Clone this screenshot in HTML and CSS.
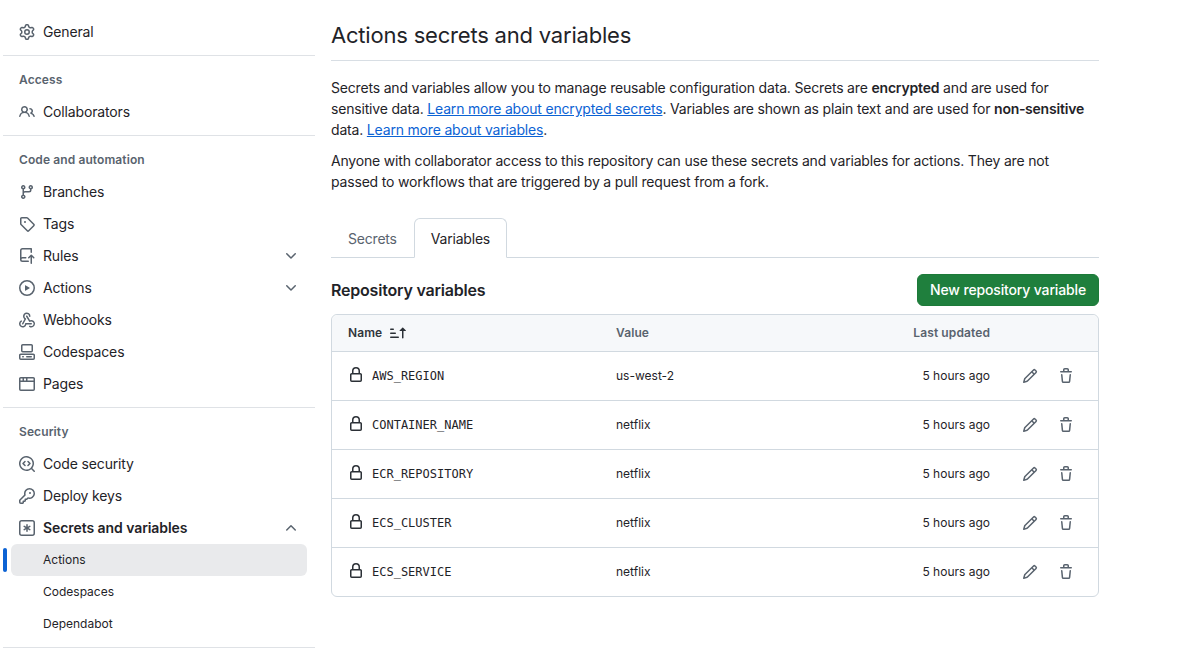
FILE: index.html
```html
<!DOCTYPE html>
<html lang="en">
<head>
    <meta charset="utf-8">
    <title>Actions secrets and variables</title>
    <link rel="stylesheet" href="styles.css">
</head>
<body>

<div class="layout">

    <nav class="sidebar">
        <a class="item"><svg class="icon" viewBox="0 0 16 16"><path d="M8 0a8.2 8.2 0 0 1 .701.031C9.444.095 9.99.645 10.16 1.29l.288 1.107c.018.066.079.158.212.224.231.114.454.243.668.386.123.082.233.09.299.071l1.103-.303c.644-.176 1.392.021 1.82.63.27.385.506.792.704 1.218.315.675.111 1.422-.364 1.891l-.814.806c-.049.048-.098.147-.088.294.016.257.016.515 0 .772-.01.147.038.246.088.294l.814.806c.475.469.679 1.216.364 1.891a7.977 7.977 0 0 1-.704 1.217c-.428.61-1.176.807-1.82.63l-1.102-.302c-.067-.019-.177-.011-.3.071a5.909 5.909 0 0 1-.668.386c-.133.066-.194.158-.211.224l-.29 1.106c-.168.646-.715 1.196-1.458 1.26a8.006 8.006 0 0 1-1.402 0c-.743-.064-1.289-.614-1.458-1.26l-.289-1.106c-.018-.066-.079-.158-.212-.224a5.738 5.738 0 0 1-.668-.386c-.123-.082-.233-.09-.299-.071l-1.103.303c-.644.176-1.392-.021-1.82-.63a8.12 8.12 0 0 1-.704-1.218c-.315-.675-.111-1.422.363-1.891l.815-.806c.05-.048.098-.147.088-.294a6.214 6.214 0 0 1 0-.772c.01-.147-.038-.246-.088-.294l-.815-.806C.635 6.045.431 5.298.746 4.623a7.92 7.92 0 0 1 .704-1.217c.428-.61 1.176-.807 1.82-.63l1.102.302c.067.019.177.011.3-.071.214-.143.437-.272.668-.386.133-.066.194-.158.211-.224l.29-1.106C6.009.645 6.556.095 7.299.03 7.53.01 7.764 0 8 0Zm-.571 1.525c-.036.003-.108.036-.137.146l-.289 1.105c-.147.561-.549.967-.998 1.189-.173.086-.34.183-.5.29-.417.278-.97.423-1.529.27l-1.103-.303c-.109-.03-.175.016-.195.045-.22.312-.412.644-.573.99-.014.031-.021.11.059.19l.815.806c.411.406.562.957.53 1.456a4.709 4.709 0 0 0 0 .582c.032.499-.119 1.05-.53 1.456l-.815.806c-.081.08-.073.159-.059.19.162.346.353.677.573.989.02.03.085.076.195.046l1.102-.303c.56-.153 1.113-.008 1.53.27.161.107.328.204.501.29.447.222.85.629.997 1.189l.289 1.105c.029.109.101.143.137.146a6.6 6.6 0 0 0 1.142 0c.036-.003.108-.036.137-.146l.289-1.105c.147-.561.549-.967.998-1.189.173-.086.34-.183.5-.29.417-.278.97-.423 1.529-.27l1.103.303c.109.029.175-.016.195-.045.22-.313.411-.644.573-.99.014-.031.021-.11-.059-.19l-.815-.806c-.411-.406-.562-.957-.53-1.456a4.709 4.709 0 0 0 0-.582c-.032-.499.119-1.05.53-1.456l.815-.806c.081-.08.073-.159.059-.19a6.464 6.464 0 0 0-.573-.989c-.02-.03-.085-.076-.195-.046l-1.102.303c-.56.153-1.113.008-1.53-.27a4.44 4.44 0 0 0-.501-.29c-.447-.222-.85-.629-.997-1.189l-.289-1.105c-.029-.11-.101-.143-.137-.146a6.6 6.6 0 0 0-1.142 0ZM11 8a3 3 0 1 1-6 0 3 3 0 0 1 6 0ZM9.5 8a1.5 1.5 0 1 0-3.001.001A1.5 1.5 0 0 0 9.5 8Z"/></svg>General</a>
        <hr class="divider">

        <h3 class="group">Access</h3>
        <a class="item"><svg class="icon" viewBox="0 0 16 16"><path d="M2 5.5a3.5 3.5 0 1 1 5.898 2.549 5.508 5.508 0 0 1 3.034 4.084.75.75 0 1 1-1.482.235 4 4 0 0 0-7.9 0 .75.75 0 0 1-1.482-.236A5.507 5.507 0 0 1 3.102 8.05 3.493 3.493 0 0 1 2 5.5ZM11 4a3.001 3.001 0 0 1 2.22 5.018 5.01 5.01 0 0 1 2.56 3.012.749.749 0 0 1-.885.954.752.752 0 0 1-.549-.514 3.507 3.507 0 0 0-2.522-2.372.75.75 0 0 1-.574-.73v-.352a.75.75 0 0 1 .416-.672A1.5 1.5 0 0 0 11 5.5.75.75 0 0 1 11 4Zm-5.5-.5a2 2 0 1 0-.001 3.999A2 2 0 0 0 5.5 3.5Z"/></svg>Collaborators</a>
        <hr class="divider">

        <h3 class="group">Code and automation</h3>
        <a class="item"><svg class="icon" viewBox="0 0 16 16"><path d="M9.5 3.25a2.25 2.25 0 1 1 3 2.122V6A2.5 2.5 0 0 1 10 8.5H6a1 1 0 0 0-1 1v1.128a2.251 2.251 0 1 1-1.5 0V5.372a2.25 2.25 0 1 1 1.5 0v1.836A2.493 2.493 0 0 1 6 7h4a1 1 0 0 0 1-1v-.628A2.25 2.25 0 0 1 9.5 3.25Zm-6 0a.75.75 0 1 0 1.5 0 .75.75 0 0 0-1.5 0Zm8.25-.75a.75.75 0 1 0 0 1.5.75.75 0 0 0 0-1.5ZM4.25 12a.75.75 0 1 0 0 1.5.75.75 0 0 0 0-1.5Z"/></svg>Branches</a>
        <a class="item"><svg class="icon" viewBox="0 0 16 16"><path d="M1 7.775V2.75C1 1.784 1.784 1 2.75 1h5.025c.464 0 .91.184 1.238.513l6.25 6.25a1.75 1.75 0 0 1 0 2.474l-5.026 5.026a1.75 1.75 0 0 1-2.474 0l-6.25-6.25A1.752 1.752 0 0 1 1 7.775Zm1.5 0c0 .066.026.13.073.177l6.25 6.25a.25.25 0 0 0 .354 0l5.025-5.025a.25.25 0 0 0 0-.354l-6.25-6.25a.25.25 0 0 0-.177-.073H2.75a.25.25 0 0 0-.25.25ZM6 5a1 1 0 1 1 0 2 1 1 0 0 1 0-2Z"/></svg>Tags</a>
        <a class="item"><svg class="icon" viewBox="0 0 16 16"><path d="M1 2.5A2.5 2.5 0 0 1 3.5 0h8.75a.75.75 0 0 1 .75.75v3.5a.75.75 0 0 1-1.5 0V1.5h-8a1 1 0 0 0-1 1v6.708A2.493 2.493 0 0 1 3.5 9h3.25a.75.75 0 0 1 0 1.5H3.5a1 1 0 0 0 0 2h5.75a.75.75 0 0 1 0 1.5H3.5A2.5 2.5 0 0 1 1 11.5Zm13.23 7.79h-.001l-1.224-1.224v6.184a.75.75 0 0 1-1.5 0V9.066L10.28 10.29a.75.75 0 0 1-1.06-1.061l2.505-2.504a.75.75 0 0 1 1.06 0L15.29 9.23a.751.751 0 0 1-.018 1.042.751.751 0 0 1-1.042.018Z"/></svg>Rules<svg class="chevron" viewBox="0 0 16 16"><path d="M12.78 5.22a.749.749 0 0 1 0 1.06l-4.25 4.25a.749.749 0 0 1-1.06 0L3.22 6.28a.749.749 0 1 1 1.06-1.06L8 8.939l3.72-3.719a.749.749 0 0 1 1.06 0Z"/></svg></a>
        <a class="item"><svg class="icon" viewBox="0 0 16 16"><path d="M8 0a8 8 0 1 1 0 16A8 8 0 0 1 8 0ZM1.5 8a6.5 6.5 0 1 0 13 0 6.5 6.5 0 0 0-13 0Zm4.879-2.773 4.264 2.559a.25.25 0 0 1 0 .428l-4.264 2.559A.25.25 0 0 1 6 10.559V5.442a.25.25 0 0 1 .379-.215Z"/></svg>Actions<svg class="chevron" viewBox="0 0 16 16"><path d="M12.78 5.22a.749.749 0 0 1 0 1.06l-4.25 4.25a.749.749 0 0 1-1.06 0L3.22 6.28a.749.749 0 1 1 1.06-1.06L8 8.939l3.72-3.719a.749.749 0 0 1 1.06 0Z"/></svg></a>
        <a class="item"><svg class="icon" viewBox="0 0 16 16"><path d="M5.5 4.25a2.25 2.25 0 0 1 4.5 0 .75.75 0 0 0 1.5 0 3.75 3.75 0 1 0-6.14 2.889l-2.272 4.258a.75.75 0 0 0 1.324.706L7 7.25a.75.75 0 0 0-.309-1.015A2.25 2.25 0 0 1 5.5 4.25Z"/><path d="M7.364 3.607a.75.75 0 0 1 1.03.257l2.608 4.349a3.75 3.75 0 1 1-.628 6.785.75.75 0 0 1 .752-1.299 2.25 2.25 0 1 0-.033-3.88.75.75 0 0 1-1.03-.256L7.107 4.636a.75.75 0 0 1 .257-1.03Z"/><path d="M2.9 8.776A.75.75 0 0 1 2.625 9.8 2.25 2.25 0 1 0 6 11.75a.75.75 0 0 1 .75-.751h5.5a.75.75 0 0 1 0 1.5H7.425a3.751 3.751 0 1 1-5.55-3.998.75.75 0 0 1 1.024.274Z"/></svg>Webhooks</a>
        <a class="item"><svg class="icon" viewBox="0 0 16 16"><path d="M0 11.25c0-.966.784-1.75 1.75-1.75h12.5c.966 0 1.75.784 1.75 1.75v3A1.75 1.75 0 0 1 14.25 16H1.75A1.75 1.75 0 0 1 0 14.25Zm2-9.5C2 .784 2.784 0 3.75 0h8.5C13.216 0 14 .784 14 1.75v5a1.75 1.75 0 0 1-1.75 1.75h-8.5A1.75 1.75 0 0 1 2 6.75Zm1.75-.25a.25.25 0 0 0-.25.25v5c0 .138.112.25.25.25h8.5a.25.25 0 0 0 .25-.25v-5a.25.25 0 0 0-.25-.25Zm-2 9.5a.25.25 0 0 0-.25.25v3c0 .138.112.25.25.25h12.5a.25.25 0 0 0 .25-.25v-3a.25.25 0 0 0-.25-.25Z"/><path d="M7 12.75a.75.75 0 0 1 .75-.75h4.5a.75.75 0 0 1 0 1.5h-4.5a.75.75 0 0 1-.75-.75Zm-4 0a.75.75 0 0 1 .75-.75h.5a.75.75 0 0 1 0 1.5h-.5a.75.75 0 0 1-.75-.75Z"/></svg>Codespaces</a>
        <a class="item"><svg class="icon" viewBox="0 0 16 16"><path d="M0 2.75C0 1.784.784 1 1.75 1h12.5c.966 0 1.75.784 1.75 1.75v10.5A1.75 1.75 0 0 1 14.25 15H1.75A1.75 1.75 0 0 1 0 13.25ZM14.5 6h-13v7.25c0 .138.112.25.25.25h12.5a.25.25 0 0 0 .25-.25Zm-6-3.5v2h6V2.75a.25.25 0 0 0-.25-.25ZM5 2.5v2h2v-2Zm-3.25 0a.25.25 0 0 0-.25.25V4.5h2v-2Z"/></svg>Pages</a>
        <hr class="divider">

        <h3 class="group">Security</h3>
        <a class="item"><svg class="icon" viewBox="0 0 16 16"><path d="M8.47 4.97a.75.75 0 0 0 0 1.06L9.94 7.5 8.47 8.97a.75.75 0 1 0 1.06 1.06l2-2a.75.75 0 0 0 0-1.06l-2-2a.75.75 0 0 0-1.06 0ZM6.53 6.03a.75.75 0 0 0-1.06-1.06l-2 2a.75.75 0 0 0 0 1.06l2 2a.75.75 0 1 0 1.06-1.06L5.06 7.5l1.47-1.47Z"/><path d="M12.246 13.307a7.501 7.501 0 1 1 1.06-1.06l2.474 2.473a.749.749 0 0 1-.326 1.275.749.749 0 0 1-.734-.215ZM1.5 7.5a6.002 6.002 0 0 0 3.608 5.504 6.002 6.002 0 0 0 6.486-1.117.748.748 0 0 1 .292-.293A6 6 0 1 0 1.5 7.5Z"/></svg>Code security</a>
        <a class="item"><svg class="icon" viewBox="0 0 16 16"><path d="M10.5 0a5.499 5.499 0 1 1-1.288 10.848l-.932.932a.749.749 0 0 1-.53.22H7v.75a.749.749 0 0 1-.22.53l-.5.5a.749.749 0 0 1-.53.22H5v.75a.749.749 0 0 1-.22.53l-.5.5a.749.749 0 0 1-.53.22h-2A1.75 1.75 0 0 1 0 14.25v-2c0-.199.079-.389.22-.53l4.932-4.932A5.5 5.5 0 0 1 10.5 0Zm-4 5.5c-.001.431.069.86.205 1.269a.75.75 0 0 1-.181.768L1.5 12.56v1.69c0 .138.112.25.25.25h1.69l.06-.06v-1.19a.75.75 0 0 1 .75-.75h1.19l.06-.06v-1.19a.75.75 0 0 1 .75-.75h1.19l1.023-1.025a.75.75 0 0 1 .768-.18A4 4 0 1 0 6.5 5.5ZM11 6a1 1 0 1 1 0-2 1 1 0 0 1 0 2Z"/></svg>Deploy keys</a>
        <a class="item open"><svg class="icon" viewBox="0 0 16 16"><path d="M0 2.75A2.75 2.75 0 0 1 2.75 0h10.5A2.75 2.75 0 0 1 16 2.75v10.5A2.75 2.75 0 0 1 13.25 16H2.75A2.75 2.75 0 0 1 0 13.25ZM2.75 1.5c-.69 0-1.25.56-1.25 1.25v10.5c0 .69.56 1.25 1.25 1.25h10.5c.69 0 1.25-.56 1.25-1.25V2.75c0-.69-.56-1.25-1.25-1.25Z"/><path d="M8 4a.75.75 0 0 1 .75.75V6.7l1.69-.975a.75.75 0 0 1 .75 1.3L9.5 8l1.69.976a.75.75 0 0 1-.75 1.298L8.75 9.3v1.951a.75.75 0 0 1-1.5 0V9.299l-1.69.976a.75.75 0 0 1-.75-1.3L6.5 8l-1.69-.975a.75.75 0 0 1 .75-1.3l1.69.976V4.75A.75.75 0 0 1 8 4Z"/></svg>Secrets and variables<svg class="chevron" viewBox="0 0 16 16"><path d="M3.22 10.53a.749.749 0 0 1 0-1.06l4.25-4.25a.749.749 0 0 1 1.06 0l4.25 4.25a.749.749 0 1 1-1.06 1.06L8 6.811 4.28 10.53a.749.749 0 0 1-1.06 0Z"/></svg></a>
        <a class="item sub current">Actions</a>
        <a class="item sub">Codespaces</a>
        <a class="item sub">Dependabot</a>
        <hr class="divider">
    </nav>

    <main class="content">
        <h1 class="title">Actions secrets and variables</h1>

        <p class="intro">
            Secrets and variables allow you to manage reusable configuration data. Secrets are <b>encrypted</b> and are used for<br>
            sensitive data. <a href="#">Learn more about encrypted secrets</a>. Variables are shown as plain text and are used for <b>non&#8209;sensitive</b><br>
            data. <a href="#">Learn more about variables</a>.
        </p>
        <p class="intro">
            Anyone with collaborator access to this repository can use these secrets and variables for actions. They are not<br>
            passed to workflows that are triggered by a pull request from a fork.
        </p>

        <div class="tabs">
            <a class="tab">Secrets</a>
            <a class="tab selected">Variables</a>
        </div>

        <div class="heading">
            <h2>Repository variables</h2>
            <button class="new-btn">New repository variable</button>
        </div>

        <div class="vars">
            <div class="row head">
                <span class="name">Name <svg class="sort" viewBox="0 0 16 16"><path d="m12.927 2.573 3 3A.25.25 0 0 1 15.75 6H13.5v6.75a.75.75 0 0 1-1.5 0V6H9.75a.25.25 0 0 1-.177-.427l3-3a.25.25 0 0 1 .354 0ZM0 12.25a.75.75 0 0 1 .75-.75h7.5a.75.75 0 0 1 0 1.5H.75a.75.75 0 0 1-.75-.75Zm0-4a.75.75 0 0 1 .75-.75h4.5a.75.75 0 0 1 0 1.5H.75A.75.75 0 0 1 0 8.25Zm0-4a.75.75 0 0 1 .75-.75h2.5a.75.75 0 0 1 0 1.5H.75A.75.75 0 0 1 0 4.25Z"/></svg></span>
                <span>Value</span>
                <span class="updated">Last updated</span>
            </div>
            <div class="row">
                <span class="name"><svg class="icon" viewBox="0 0 16 16"><path d="M4 4a4 4 0 0 1 8 0v2h.25c.966 0 1.75.784 1.75 1.75v5.5A1.75 1.75 0 0 1 12.25 15h-8.5A1.75 1.75 0 0 1 2 13.25v-5.5C2 6.784 2.784 6 3.75 6H4Zm8.25 3.5h-8.5a.25.25 0 0 0-.25.25v5.5c0 .138.112.25.25.25h8.5a.25.25 0 0 0 .25-.25v-5.5a.25.25 0 0 0-.25-.25ZM10.5 6V4a2.5 2.5 0 1 0-5 0v2Z"/></svg><code>AWS_REGION</code></span>
                <span>us-west-2</span>
                <span class="updated">5 hours ago</span>
                <span class="actions"><svg class="icon" viewBox="0 0 16 16"><path d="M11.013 1.427a1.75 1.75 0 0 1 2.474 0l1.086 1.086a1.75 1.75 0 0 1 0 2.474l-8.61 8.61c-.21.21-.47.364-.756.445l-3.251.93a.75.75 0 0 1-.927-.928l.929-3.25c.081-.286.235-.547.445-.758l8.61-8.61Zm.176 4.823L9.75 4.81l-6.286 6.287a.253.253 0 0 0-.064.108l-.558 1.953 1.953-.558a.253.253 0 0 0 .108-.064Zm1.238-3.763a.25.25 0 0 0-.354 0L10.811 3.75l1.439 1.44 1.263-1.263a.25.25 0 0 0 0-.354Z"/></svg><svg class="icon" viewBox="0 0 16 16"><path d="M11 1.75V3h2.25a.75.75 0 0 1 0 1.5H2.75a.75.75 0 0 1 0-1.5H5V1.75C5 .784 5.784 0 6.75 0h2.5C10.216 0 11 .784 11 1.75ZM4.496 6.675l.66 6.6a.25.25 0 0 0 .249.225h5.19a.25.25 0 0 0 .249-.225l.66-6.6a.75.75 0 0 1 1.492.149l-.66 6.6A1.748 1.748 0 0 1 10.595 15h-5.19a1.75 1.75 0 0 1-1.741-1.575l-.66-6.6a.75.75 0 1 1 1.492-.15ZM6.5 1.75V3h3V1.75a.25.25 0 0 0-.25-.25h-2.5a.25.25 0 0 0-.25.25Z"/></svg></span>
            </div>
            <div class="row">
                <span class="name"><svg class="icon" viewBox="0 0 16 16"><path d="M4 4a4 4 0 0 1 8 0v2h.25c.966 0 1.75.784 1.75 1.75v5.5A1.75 1.75 0 0 1 12.25 15h-8.5A1.75 1.75 0 0 1 2 13.25v-5.5C2 6.784 2.784 6 3.75 6H4Zm8.25 3.5h-8.5a.25.25 0 0 0-.25.25v5.5c0 .138.112.25.25.25h8.5a.25.25 0 0 0 .25-.25v-5.5a.25.25 0 0 0-.25-.25ZM10.5 6V4a2.5 2.5 0 1 0-5 0v2Z"/></svg><code>CONTAINER_NAME</code></span>
                <span>netflix</span>
                <span class="updated">5 hours ago</span>
                <span class="actions"><svg class="icon" viewBox="0 0 16 16"><path d="M11.013 1.427a1.75 1.75 0 0 1 2.474 0l1.086 1.086a1.75 1.75 0 0 1 0 2.474l-8.61 8.61c-.21.21-.47.364-.756.445l-3.251.93a.75.75 0 0 1-.927-.928l.929-3.25c.081-.286.235-.547.445-.758l8.61-8.61Zm.176 4.823L9.75 4.81l-6.286 6.287a.253.253 0 0 0-.064.108l-.558 1.953 1.953-.558a.253.253 0 0 0 .108-.064Zm1.238-3.763a.25.25 0 0 0-.354 0L10.811 3.75l1.439 1.44 1.263-1.263a.25.25 0 0 0 0-.354Z"/></svg><svg class="icon" viewBox="0 0 16 16"><path d="M11 1.75V3h2.25a.75.75 0 0 1 0 1.5H2.75a.75.75 0 0 1 0-1.5H5V1.75C5 .784 5.784 0 6.75 0h2.5C10.216 0 11 .784 11 1.75ZM4.496 6.675l.66 6.6a.25.25 0 0 0 .249.225h5.19a.25.25 0 0 0 .249-.225l.66-6.6a.75.75 0 0 1 1.492.149l-.66 6.6A1.748 1.748 0 0 1 10.595 15h-5.19a1.75 1.75 0 0 1-1.741-1.575l-.66-6.6a.75.75 0 1 1 1.492-.15ZM6.5 1.75V3h3V1.75a.25.25 0 0 0-.25-.25h-2.5a.25.25 0 0 0-.25.25Z"/></svg></span>
            </div>
            <div class="row">
                <span class="name"><svg class="icon" viewBox="0 0 16 16"><path d="M4 4a4 4 0 0 1 8 0v2h.25c.966 0 1.75.784 1.75 1.75v5.5A1.75 1.75 0 0 1 12.25 15h-8.5A1.75 1.75 0 0 1 2 13.25v-5.5C2 6.784 2.784 6 3.75 6H4Zm8.25 3.5h-8.5a.25.25 0 0 0-.25.25v5.5c0 .138.112.25.25.25h8.5a.25.25 0 0 0 .25-.25v-5.5a.25.25 0 0 0-.25-.25ZM10.5 6V4a2.5 2.5 0 1 0-5 0v2Z"/></svg><code>ECR_REPOSITORY</code></span>
                <span>netflix</span>
                <span class="updated">5 hours ago</span>
                <span class="actions"><svg class="icon" viewBox="0 0 16 16"><path d="M11.013 1.427a1.75 1.75 0 0 1 2.474 0l1.086 1.086a1.75 1.75 0 0 1 0 2.474l-8.61 8.61c-.21.21-.47.364-.756.445l-3.251.93a.75.75 0 0 1-.927-.928l.929-3.25c.081-.286.235-.547.445-.758l8.61-8.61Zm.176 4.823L9.75 4.81l-6.286 6.287a.253.253 0 0 0-.064.108l-.558 1.953 1.953-.558a.253.253 0 0 0 .108-.064Zm1.238-3.763a.25.25 0 0 0-.354 0L10.811 3.75l1.439 1.44 1.263-1.263a.25.25 0 0 0 0-.354Z"/></svg><svg class="icon" viewBox="0 0 16 16"><path d="M11 1.75V3h2.25a.75.75 0 0 1 0 1.5H2.75a.75.75 0 0 1 0-1.5H5V1.75C5 .784 5.784 0 6.75 0h2.5C10.216 0 11 .784 11 1.75ZM4.496 6.675l.66 6.6a.25.25 0 0 0 .249.225h5.19a.25.25 0 0 0 .249-.225l.66-6.6a.75.75 0 0 1 1.492.149l-.66 6.6A1.748 1.748 0 0 1 10.595 15h-5.19a1.75 1.75 0 0 1-1.741-1.575l-.66-6.6a.75.75 0 1 1 1.492-.15ZM6.5 1.75V3h3V1.75a.25.25 0 0 0-.25-.25h-2.5a.25.25 0 0 0-.25.25Z"/></svg></span>
            </div>
            <div class="row">
                <span class="name"><svg class="icon" viewBox="0 0 16 16"><path d="M4 4a4 4 0 0 1 8 0v2h.25c.966 0 1.75.784 1.75 1.75v5.5A1.75 1.75 0 0 1 12.25 15h-8.5A1.75 1.75 0 0 1 2 13.25v-5.5C2 6.784 2.784 6 3.75 6H4Zm8.25 3.5h-8.5a.25.25 0 0 0-.25.25v5.5c0 .138.112.25.25.25h8.5a.25.25 0 0 0 .25-.25v-5.5a.25.25 0 0 0-.25-.25ZM10.5 6V4a2.5 2.5 0 1 0-5 0v2Z"/></svg><code>ECS_CLUSTER</code></span>
                <span>netflix</span>
                <span class="updated">5 hours ago</span>
                <span class="actions"><svg class="icon" viewBox="0 0 16 16"><path d="M11.013 1.427a1.75 1.75 0 0 1 2.474 0l1.086 1.086a1.75 1.75 0 0 1 0 2.474l-8.61 8.61c-.21.21-.47.364-.756.445l-3.251.93a.75.75 0 0 1-.927-.928l.929-3.25c.081-.286.235-.547.445-.758l8.61-8.61Zm.176 4.823L9.75 4.81l-6.286 6.287a.253.253 0 0 0-.064.108l-.558 1.953 1.953-.558a.253.253 0 0 0 .108-.064Zm1.238-3.763a.25.25 0 0 0-.354 0L10.811 3.75l1.439 1.44 1.263-1.263a.25.25 0 0 0 0-.354Z"/></svg><svg class="icon" viewBox="0 0 16 16"><path d="M11 1.75V3h2.25a.75.75 0 0 1 0 1.5H2.75a.75.75 0 0 1 0-1.5H5V1.75C5 .784 5.784 0 6.75 0h2.5C10.216 0 11 .784 11 1.75ZM4.496 6.675l.66 6.6a.25.25 0 0 0 .249.225h5.19a.25.25 0 0 0 .249-.225l.66-6.6a.75.75 0 0 1 1.492.149l-.66 6.6A1.748 1.748 0 0 1 10.595 15h-5.19a1.75 1.75 0 0 1-1.741-1.575l-.66-6.6a.75.75 0 1 1 1.492-.15ZM6.5 1.75V3h3V1.75a.25.25 0 0 0-.25-.25h-2.5a.25.25 0 0 0-.25.25Z"/></svg></span>
            </div>
            <div class="row">
                <span class="name"><svg class="icon" viewBox="0 0 16 16"><path d="M4 4a4 4 0 0 1 8 0v2h.25c.966 0 1.75.784 1.75 1.75v5.5A1.75 1.75 0 0 1 12.25 15h-8.5A1.75 1.75 0 0 1 2 13.25v-5.5C2 6.784 2.784 6 3.75 6H4Zm8.25 3.5h-8.5a.25.25 0 0 0-.25.25v5.5c0 .138.112.25.25.25h8.5a.25.25 0 0 0 .25-.25v-5.5a.25.25 0 0 0-.25-.25ZM10.5 6V4a2.5 2.5 0 1 0-5 0v2Z"/></svg><code>ECS_SERVICE</code></span>
                <span>netflix</span>
                <span class="updated">5 hours ago</span>
                <span class="actions"><svg class="icon" viewBox="0 0 16 16"><path d="M11.013 1.427a1.75 1.75 0 0 1 2.474 0l1.086 1.086a1.75 1.75 0 0 1 0 2.474l-8.61 8.61c-.21.21-.47.364-.756.445l-3.251.93a.75.75 0 0 1-.927-.928l.929-3.25c.081-.286.235-.547.445-.758l8.61-8.61Zm.176 4.823L9.75 4.81l-6.286 6.287a.253.253 0 0 0-.064.108l-.558 1.953 1.953-.558a.253.253 0 0 0 .108-.064Zm1.238-3.763a.25.25 0 0 0-.354 0L10.811 3.75l1.439 1.44 1.263-1.263a.25.25 0 0 0 0-.354Z"/></svg><svg class="icon" viewBox="0 0 16 16"><path d="M11 1.75V3h2.25a.75.75 0 0 1 0 1.5H2.75a.75.75 0 0 1 0-1.5H5V1.75C5 .784 5.784 0 6.75 0h2.5C10.216 0 11 .784 11 1.75ZM4.496 6.675l.66 6.6a.25.25 0 0 0 .249.225h5.19a.25.25 0 0 0 .249-.225l.66-6.6a.75.75 0 0 1 1.492.149l-.66 6.6A1.748 1.748 0 0 1 10.595 15h-5.19a1.75 1.75 0 0 1-1.741-1.575l-.66-6.6a.75.75 0 1 1 1.492-.15ZM6.5 1.75V3h3V1.75a.25.25 0 0 0-.25-.25h-2.5a.25.25 0 0 0-.25.25Z"/></svg></span>
            </div>
        </div>
    </main>

</div>

</body>
</html>
```

FILE: styles.css
```css
BODY {
    margin: 0;
    background: #fff;
    color: #1f2328;
    font-family: Inter, "Noto Sans", sans-serif;
    font-size: 14px;
    line-height: 21px;
    letter-spacing: -0.15px;
}

A {
    color: inherit;
    text-decoration: none;
}

.layout {
    display: flex;
    gap: 16px;
    padding-left: 3px;
}

.icon {
    width: 16px;
    height: 16px;
    flex: none;
    fill: #59636e;
}

/* sidebar */

.sidebar {
    width: 312px;
    flex: none;
    padding-top: 16px;
}

.item {
    position: relative;
    display: flex;
    align-items: center;
    gap: 8px;
    height: 32px;
    margin: 0 8px;
    padding: 0 8px;
    border-radius: 6px;
    line-height: 20px;
}

.item.open {
    font-weight: 600;
    letter-spacing: -0.07px;
}

.item.sub {
    padding-left: 32px;
    font-size: 12px;
    letter-spacing: 0;
}

.item.current {
    background: #e9eaec;
}

.item.current::before {
    content: "";
    position: absolute;
    left: -8px;
    top: 4px;
    width: 4px;
    height: 24px;
    border-radius: 6px;
    background: #0c63d4;
}

.chevron {
    width: 16px;
    height: 16px;
    margin-left: auto;
    fill: #59636e;
}

.divider {
    height: 1px;
    margin: 7px 0 0;
    border: 0;
    background: #dfe2e6;
}

.group {
    margin: 0;
    padding: 16px 16px 8px;
    color: #59636e;
    font-size: 12px;
    font-weight: 600;
    line-height: 16px;
    letter-spacing: 0.1px;
}

/* main column */

.content {
    width: 768px;
    flex: none;
}

.title {
    margin: 0 0 16px;
    padding: 17px 0 7px;
    border-bottom: 1px solid #d8dee4;
    font-size: 22px;
    font-weight: 400;
    line-height: 36px;
    letter-spacing: -0.2px;
}

.intro {
    margin: 0 0 10px;
    letter-spacing: -0.18px;
    white-space: nowrap;
}

.intro A {
    color: #0c63d4;
    text-decoration: underline;
}

.intro B {
    font-weight: 600;
}

.tabs {
    display: flex;
    margin-top: 26px;
    border-bottom: 1px solid #d1d9e0;
}

.tab {
    margin-bottom: -1px;
    padding: 9px 16px 8px;
    border: 1px solid transparent;
    border-radius: 6px 6px 0 0;
    color: #59636e;
    letter-spacing: -0.2px;
}

.tab.selected {
    border-color: #d1d9e0;
    border-bottom-color: #fff;
    background: #fff;
    color: #1f2328;
}

.heading {
    display: flex;
    align-items: center;
    justify-content: space-between;
    margin: 16px 0 8px;
}

.heading H2 {
    margin: 0;
    font-size: 16px;
    font-weight: 600;
    letter-spacing: -0.2px;
}

.new-btn {
    height: 32px;
    padding: 0 12px 2px;
    border: 1px solid #1d7a39;
    border-radius: 6px;
    background: #1f7f3d;
    color: #fff;
    font-family: inherit;
    font-size: 14px;
    font-weight: 500;
    letter-spacing: -0.15px;
}

/* variables table */

.vars {
    border: 1px solid #d1d9e0;
    border-radius: 6px;
    font-size: 12px;
    letter-spacing: 0;
}

.row {
    display: grid;
    grid-template-columns: 268px 268px 106px 1fr;
    align-items: center;
    height: 48px;
    padding-left: 16px;
    border-top: 1px solid #d1d9e0;
    line-height: 20px;
}

.row.head {
    height: 36px;
    border-top: 0;
    border-radius: 6px 6px 0 0;
    background: #f6f8fa;
    color: #59636e;
    font-weight: 600;
    letter-spacing: 0.1px;
}

.name {
    display: flex;
    align-items: center;
    gap: 8px;
}

.name .icon {
    margin-bottom: 2px;
    fill: #2b3036;
}

.head .name {
    color: #31363c;
}

.sort {
    width: 16px;
    height: 16px;
    fill: #2b3036;
}

.name CODE {
    font-family: "DejaVu Sans Mono", "Liberation Mono", monospace;
    font-size: 12px;
}

.updated {
    text-align: right;
}

.actions {
    display: flex;
    justify-content: flex-end;
    gap: 20px;
    padding-right: 24px;
}
```
